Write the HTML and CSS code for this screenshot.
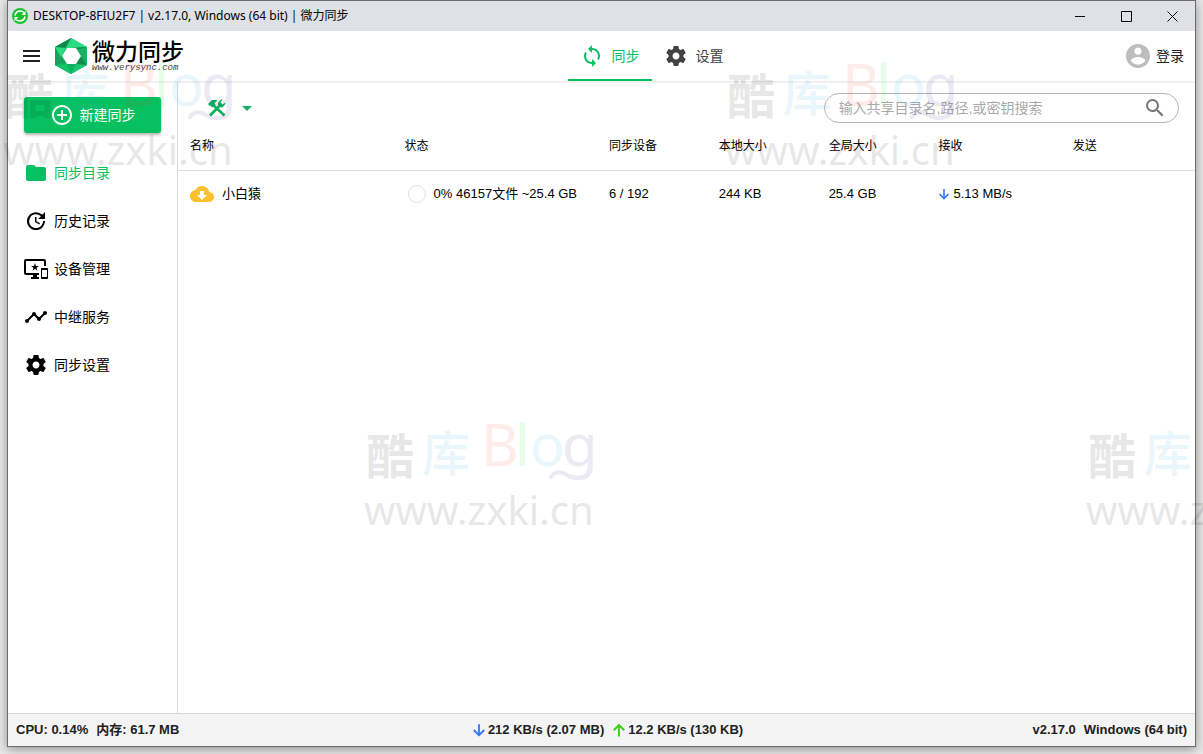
FILE: index.html
```html
<!DOCTYPE html>
<html lang="zh-CN">
<head>
<meta charset="utf-8">
<title>微力同步</title>
<link rel="stylesheet" href="styles.css">
</head>
<body>
<svg class="defs" aria-hidden="true">
  <defs>
    <symbol id="gear" viewBox="0 0 24 24"><path d="M19.43 12.98c.04-.32.07-.64.07-.98s-.03-.66-.07-.98l2.11-1.65c.19-.15.24-.42.12-.64l-2-3.46c-.12-.22-.39-.3-.61-.22l-2.49 1c-.52-.4-1.08-.73-1.69-.98l-.38-2.65C14.46 2.18 14.25 2 14 2h-4c-.25 0-.46.18-.49.42l-.38 2.65c-.61.25-1.17.59-1.69.98l-2.49-1c-.23-.09-.49 0-.61.22l-2 3.46c-.13.22-.07.49.12.64l2.11 1.65c-.04.32-.07.65-.07.98s.03.66.07.98l-2.11 1.65c-.19.15-.24.42-.12.64l2 3.46c.12.22.39.3.61.22l2.49-1c.52.4 1.08.73 1.69.98l.38 2.65c.03.24.24.42.49.42h4c.25 0 .46-.18.49-.42l.38-2.65c.61-.25 1.17-.59 1.69-.98l2.49 1c.23.09.49 0 .61-.22l2-3.46c.12-.22.07-.49-.12-.64l-2.11-1.65zM12 15.5c-1.93 0-3.5-1.57-3.5-3.5s1.570-3.500 3.500-3.500 3.500 1.570 3.500 3.500-1.570 3.500-3.500 3.500z"/></symbol>
    <symbol id="arrow-down" viewBox="0 0 12 12"><path d="M6 1v9M1.500 6L6 10.500 10.500 6" fill="none" stroke="#3577ff" stroke-width="1.600"/></symbol>
    <symbol id="arrow-up" viewBox="0 0 12 12"><path d="M6 11.500V2M1.500 6.200L6 1.700l4.500 4.500" fill="none" stroke="#35d011" stroke-width="1.600"/></symbol>
    <symbol id="mark" viewBox="0 0 240 120">
      <g class="mark-grey"><text class="mark-cjk mark-bold" x="2" y="52">酷</text><text class="mark-url" x="0" y="103">www.zxki.cn</text></g>
      <text class="mark-cjk mark-blue" x="58" y="49">库</text>
      <text class="mark-latin mark-red" x="117" y="44">B</text>
      <text class="mark-latin mark-green" x="151" y="44">l</text>
      <text class="mark-latin mark-blue" x="166" y="44">o</text>
      <text class="mark-latin mark-violet" x="198" y="44">g</text>
      <path class="mark-tail" d="M187 55c4-6 10-6 16-2"/>
    </symbol>
  </defs>
</svg>

<div class="window">
  <header class="titlebar">
    <svg class="app-icon" viewBox="0 0 16 16"><circle cx="8" cy="8" r="8" fill="#19c22d"/><path d="M3 7.500C3.500 4.500 6 3 8.500 3c1.500 0 2.500.6 3.500 1.500M13 8.500c-.5 3-3 4.500-5.500 4.500-1.500 0-2.500-.6-3.500-1.500" fill="none" stroke="#fff" stroke-width="1.600"/><path d="M13.500 3v4h-4zM2.500 13V9h4z" fill="#fff"/></svg>
    <h1 class="title">DESKTOP-8FIU2F7 | v2.17.0, Windows (64 bit) | 微力同步</h1>
    <button class="win-btn" aria-label="最小化"><svg viewBox="0 0 11 11"><path d="M0 5.500h10"/></svg></button>
    <button class="win-btn" aria-label="最大化"><svg viewBox="0 0 11 11"><path d="M.5.500h10v10H.5z"/></svg></button>
    <button class="win-btn" aria-label="关闭"><svg viewBox="0 0 11 11"><path d="M.5.500l10 10M10.500.500l-10 10"/></svg></button>
  </header>

  <div class="appbar">
    <div class="brand">
      <button class="icon-btn" aria-label="菜单"><svg class="menu-icon" viewBox="0 0 18 12"><path d="M0 1h17M0 6h17M0 11h17" stroke="#222" stroke-width="2"/></svg></button>
      <svg class="logo" viewBox="0 0 32 36">
        <path d="M16 0L32 9v18L16 36 0 27V9z" fill="#10a85a"/>
        <path d="M16 0l16 9-22 2z" fill="#2bdc80"/>
        <path d="M16 0L0 9l10 2z" fill="#0b8a4a"/>
        <path d="M32 9v18l-9-16z" fill="#15b463"/>
        <path d="M32 9L16 10l7 1z" fill="#0a8245"/>
        <path d="M32 27L16 36l9-18z" fill="#1fc472"/>
        <path d="M32 27l-7-9-5 8z" fill="#0b8f4b"/>
        <path d="M16 36L0 27l21-1z" fill="#0cb25e"/>
        <path d="M0 27V9l10 17z" fill="#15a459"/>
        <path d="M0 9l11 1-5 9z" fill="#2bdc80"/>
        <path d="M0 27l12-1 4 10z" fill="#12c468"/>
        <path d="M12 10h9l5 8-5 8h-9l-5-8z" fill="#fff"/>
      </svg>
      <div class="brand-text"><span class="brand-name">微力同步</span><span class="brand-url">www.verysync.com</span></div>
    </div>
    <nav class="tabs">
      <a class="tab active" href="#"><svg class="icon" viewBox="0 0 24 24"><path d="M12 4V1L8 5l4 4V6c3.310 0 6 2.690 6 6 0 1.010-.25 1.970-.7 2.800l1.460 1.460A7.930 7.930 0 0 0 20 12c0-4.420-3.580-8-8-8zm0 14c-3.310 0-6-2.690-6-6 0-1.010.25-1.970.7-2.800L5.240 7.740A7.930 7.930 0 0 0 4 12c0 4.420 3.580 8 8 8v3l4-4-4-4v3z"/></svg>同步</a>
      <a class="tab" href="#"><svg class="icon"><use href="#gear"/></svg>设置</a>
    </nav>
    <button class="login"><svg class="avatar" viewBox="2 2 20 20"><path d="M12 2C6.480 2 2 6.480 2 12s4.480 10 10 10 10-4.480 10-10S17.520 2 12 2zm0 3c1.660 0 3 1.340 3 3s-1.340 3-3 3-3-1.340-3-3 1.340-3 3-3zm0 14.200c-2.500 0-4.710-1.280-6-3.220.03-1.990 4-3.080 6-3.080 1.990 0 5.970 1.090 6 3.080-1.290 1.940-3.500 3.220-6 3.220z"/></svg>登录</button>
  </div>

  <div class="body">
    <aside class="sidebar">
      <button class="new-btn"><svg class="icon" viewBox="0 0 24 24"><path d="M13 7h-2v4H7v2h4v4h2v-4h4v-2h-4V7zm-1-5C6.480 2 2 6.480 2 12s4.480 10 10 10 10-4.480 10-10S17.520 2 12 2zm0 18c-4.410 0-8-3.590-8-8s3.590-8 8-8 8 3.590 8 8-3.590 8-8 8z"/></svg>新建同步</button>
      <nav class="side-nav">
        <a class="side-link active" href="#"><svg class="icon" viewBox="0 0 24 24"><path d="M10 4H4c-1.100 0-2 .9-2 2v12c0 1.100.9 2 2 2h16c1.100 0 2-.9 2-2V8c0-1.100-.9-2-2-2h-8l-2-2z"/></svg>同步目录</a>
        <a class="side-link" href="#"><svg class="icon" viewBox="0 0 24 24"><path d="M21 10.120h-6.780l2.740-2.820c-2.730-2.700-7.150-2.800-9.880-.1a6.875 6.875 0 0 0 0 9.790c2.730 2.700 7.150 2.700 9.880 0C18.320 15.650 19 14.080 19 12.100h2c0 1.980-.88 4.550-2.640 6.290-3.510 3.480-9.210 3.480-12.720 0-3.500-3.470-3.530-9.110-.02-12.580 3.510-3.470 9.140-3.470 12.650 0L21 3v7.120zM12.500 8v4.250l3.500 2.080-.72 1.210L11 13V8h1.500z"/></svg>历史记录</a>
        <a class="side-link" href="#"><svg class="icon" viewBox="0 0 24 24"><path d="M23 11.010L18 11c-.55 0-1 .45-1 1v9c0 .55.45 1 1 1h5c.55 0 1-.45 1-1v-9c0-.55-.45-.99-1-.99zM23 20h-5v-7h5v7zM20 2H2C.89 2 0 2.890 0 4v12c0 1.100.89 2 2 2h7v2H7v2h8v-2h-2v-2h2v-2H2V4h18v5h2V4c0-1.110-.9-2-2-2zm-8.030 7L11 6l-.97 3H7l2.470 1.760-.94 2.910 2.470-1.800 2.470 1.800-.94-2.910L15 9h-3.030z"/></svg>设备管理</a>
        <a class="side-link" href="#"><svg class="icon" viewBox="0 0 24 24"><path d="M23 8c0 1.100-.9 2-2 2-.18 0-.35-.02-.51-.07l-3.560 3.550c.05.160.07.340.07.520 0 1.100-.9 2-2 2s-2-.9-2-2c0-.18.02-.36.07-.52l-2.550-2.550c-.16.050-.34.070-.52.070s-.36-.02-.52-.07l-4.550 4.560c.05.160.07.330.07.510 0 1.100-.9 2-2 2s-2-.9-2-2 .9-2 2-2c.18 0 .35.020.51.070l4.560-4.550C8.020 9.360 8 9.180 8 9c0-1.100.9-2 2-2s2 .9 2 2c0 .18-.02.36-.07.52l2.550 2.550c.16-.05.34-.07.52-.07s.36.020.52.070l3.550-3.560C19.020 8.350 19 8.180 19 8c0-1.100.9-2 2-2s2 .9 2 2z"/></svg>中继服务</a>
        <a class="side-link" href="#"><svg class="icon"><use href="#gear"/></svg>同步设置</a>
      </nav>
    </aside>

    <main class="content">
      <div class="toolbar">
        <button class="tools" aria-label="工具">
          <svg class="tools-icon" viewBox="0 0 18 18"><path d="M4.500 5.500L16.500 16.500M2 16.500l9-9" fill="none" stroke-width="2.800"/><path d="M0 5l4-4h5v1L6.500 4l1 1.500L4 8.500 2.500 6.500 1.500 7z" stroke="none"/><path d="M10 8V3.500L13 .5h1.500l-2 3 2 2 3-2V5l-3 3.500z" stroke="none"/></svg>
          <svg class="caret" viewBox="0 0 10 5"><path d="M0 0h10L5 5z"/></svg>
        </button>
        <form class="search">
          <input class="search-input" type="search" aria-label="搜索" placeholder="输入共享目录名,路径,或密钥搜索">
          <button class="icon-btn" type="button" aria-label="搜索"><svg class="icon" viewBox="0 0 24 24"><path d="M15.500 14h-.79l-.28-.27A6.471 6.471 0 0 0 16 9.500 6.500 6.500 0 1 0 9.500 16c1.610 0 3.090-.59 4.230-1.570l.27.280v.79l5 4.990L20.490 19l-4.990-5zm-6 0C7.010 14 5 11.990 5 9.500S7.010 5 9.500 5 14 7.010 14 9.500 11.990 14 9.500 14z"/></svg></button>
        </form>
      </div>
      <table class="files">
        <colgroup><col class="c-name"><col class="c-state"><col class="c-size"><col class="c-size"><col class="c-size"><col class="c-rate"><col class="c-rate"></colgroup>
        <thead><tr><th>名称</th><th>状态</th><th>同步设备</th><th>本地大小</th><th>全局大小</th><th>接收</th><th>发送</th></tr></thead>
        <tbody><tr>
          <td><span class="cell name"><svg class="icon cloud" viewBox="0 0 24 24"><path d="M19.350 10.040C18.670 6.590 15.640 4 12 4 9.110 4 6.600 5.640 5.350 8.040 2.340 8.360 0 10.910 0 14c0 3.310 2.690 6 6 6h13c2.760 0 5-2.240 5-5 0-2.640-2.050-4.780-4.650-4.960zM17 13l-5 5-5-5h3V9h4v4h3z"/></svg>小白猿</span></td>
          <td><span class="cell state"><span class="ring"></span>0% 46157文件 ~25.4 GB</span></td>
          <td>6 / 192</td><td>244 KB</td><td>25.4 GB</td>
          <td><span class="cell rate"><svg class="arrow small"><use href="#arrow-down"/></svg>5.13 MB/s</span></td><td></td>
        </tr></tbody>
      </table>
    </main>
  </div>

  <footer class="status">
    <div class="status-group"><span>CPU: 0.14%</span><span>内存: 61.7 MB</span></div>
    <div class="status-group"><span class="speed"><svg class="arrow"><use href="#arrow-down"/></svg>212 KB/s (2.07 MB)</span><span class="speed"><svg class="arrow"><use href="#arrow-up"/></svg>12.2 KB/s (130 KB)</span></div>
    <div class="status-group end"><span>v2.17.0</span><span>Windows (64 bit)</span></div>
  </footer>
</div>

<div class="marks" aria-hidden="true">
  <svg class="mark m1"><use href="#mark"/></svg>
  <svg class="mark m2"><use href="#mark"/></svg>
  <svg class="mark m3"><use href="#mark"/></svg>
  <svg class="mark m4"><use href="#mark"/></svg>
</div>
</body>
</html>
```
FILE: styles.css
```css
* { box-sizing: border-box; }

body {
  margin: 0;
  height: 100vh;
  padding: 0 7px 7px;
  overflow: hidden;
  position: relative;
  background: #e9e9e9;
  color: #000;
  font: 14px/20px "Liberation Sans", "Noto Sans CJK SC", sans-serif;
}

button { border: 0; padding: 0; background: none; font: inherit; color: inherit; cursor: pointer; }
a { color: inherit; text-decoration: none; }
svg { display: block; flex: none; }
.defs { position: absolute; width: 0; height: 0; }
.icon { width: 24px; height: 24px; fill: currentColor; }

.window {
  height: 100%;
  display: flex;
  flex-direction: column;
  border: 1px solid #6b6b6d;
  background: #fff;
  box-shadow: 0 2px 10px rgba(0, 0, 0, .4);
}

.titlebar { display: flex; align-items: center; height: 30px; padding-left: 4px; background: #dee1e6; }
.app-icon { width: 16px; height: 16px; }
.title { flex: 1; margin: 0 0 0 5px; font: 12px/20px "Noto Sans", "Noto Sans CJK SC", sans-serif; }
.win-btn { display: grid; place-items: center; width: 46px; height: 30px; }
.win-btn svg { width: 11px; height: 11px; fill: none; stroke: #000; }

.appbar {
  display: grid;
  grid-template-columns: 1fr auto 1fr;
  height: 51px;
  padding: 0 11px 0 15px;
  border-bottom: 1px solid #ebebeb;
  box-shadow: 0 1px 2px rgba(0, 0, 0, .06);
}
.brand { display: flex; align-items: center; }
.menu-icon { width: 18px; height: 12px; }
.logo { width: 32px; height: 36px; margin: 0 5px 0 14px; }
.brand-text { display: flex; flex-direction: column; }
.brand-name { font: 500 23px/24px "Noto Sans CJK SC", sans-serif; }
.brand-url { font: italic 9px/12px "Liberation Mono", monospace; color: #444; }
.tabs { display: flex; margin-left: 96px; }
.tab { display: flex; align-items: center; gap: 8px; padding: 2px 12px 0; color: #424242; border-bottom: 2px solid transparent; }
.tab.active { color: #07c160; border-color: #07c160; }
.login { display: flex; align-items: center; justify-self: end; gap: 6px; color: #222; }
.avatar { width: 24px; height: 24px; fill: #bdbdbd; }

.body { flex: 1; display: flex; min-height: 0; }
.sidebar { width: 170px; padding: 15px 16px; border-right: 1px solid #dcdcdc; }
.new-btn {
  display: flex;
  align-items: center;
  justify-content: center;
  gap: 6px;
  width: 100%;
  height: 36px;
  border-radius: 3px;
  background: #07c160;
  color: #fff;
  box-shadow: 0 2px 3px rgba(0, 0, 0, .3);
}
.side-nav { padding-top: 16px; }
.side-link { display: flex; align-items: center; gap: 6px; height: 48px; }
.side-link.active { color: #07c160; }

.content { flex: 1; min-width: 0; }
.toolbar { display: flex; justify-content: space-between; align-items: center; padding: 11px 16px 0 30px; }
.tools { display: flex; align-items: center; gap: 16px; }
.tools-icon { width: 18px; height: 18px; fill: #0fb45e; stroke: #0fb45e; }
.caret { width: 10px; height: 5px; fill: #0fb45e; }
.search { display: flex; align-items: center; width: 36.6%; height: 30px; padding: 0 11px 0 14px; border: 1px solid #b5b5b5; border-radius: 15px; color: #757575; }
.search-input { flex: 1; min-width: 0; padding: 0; border: 0; outline: 0; background: none; font: inherit; }
.search-input::placeholder { color: #a9a9a9; }

.files { width: 100%; table-layout: fixed; border-collapse: collapse; font-size: 13px; }
.c-name { width: 21.1%; }
.c-state { width: 20.1%; }
.c-size { width: 10.8%; }
.c-rate { width: 13.2%; }
.files th, .files td { height: 48px; padding: 0 0 0 12px; text-align: left; white-space: nowrap; }
.files th { height: 47px; font-size: 12px; font-weight: 400; border-bottom: 1px solid #dedede; }
.cell { display: flex; align-items: center; }
.name { gap: 8px; }
.cloud { color: #fbc02d; }
.state { gap: 8px; padding-left: 3px; }
.ring { width: 18px; height: 18px; border: 1px solid #e3e3e3; border-radius: 50%; }
.rate { gap: 3px; }
.arrow { width: 14px; height: 14px; }
.arrow.small { width: 12px; height: 12px; }

.status {
  display: grid;
  grid-template-columns: 1fr auto 1fr;
  align-items: center;
  height: 33px;
  padding: 0 8px;
  border-top: 1px solid #d6d6d6;
  background: #f4f4f4;
  color: #212121;
  font-size: 13px;
  font-weight: 700;
}
.status-group { display: flex; gap: 8px; }
.status-group:nth-child(2) { margin-left: 12px; }
.status-group.end { justify-content: flex-end; }
.speed { display: flex; align-items: center; gap: 2px; }

.marks { position: absolute; inset: 0; overflow: hidden; pointer-events: none; opacity: .09; }
.mark { position: absolute; width: 240px; height: 120px; }
.m1 { left: 3px; top: 62px; }
.m2 { left: 725px; top: 62px; }
.m3 { left: 364px; top: 422px; }
.m4 { left: 1086px; top: 422px; }
.mark-cjk { font: 500 48px "Noto Sans CJK SC", sans-serif; }
.mark-bold { font-weight: 700; }
.mark-latin { font: 400 58px "Noto Sans", sans-serif; }
.mark-url { font: 400 40px "Noto Sans", sans-serif; }
.mark-grey { fill: #000; }
.mark-blue { fill: #1ba1e2; }
.mark-red { fill: #f03a20; }
.mark-green { fill: #10f020; }
.mark-violet { fill: #302890; }
.mark-tail { fill: none; stroke: #302890; stroke-width: 4; stroke-linecap: round; }
```
